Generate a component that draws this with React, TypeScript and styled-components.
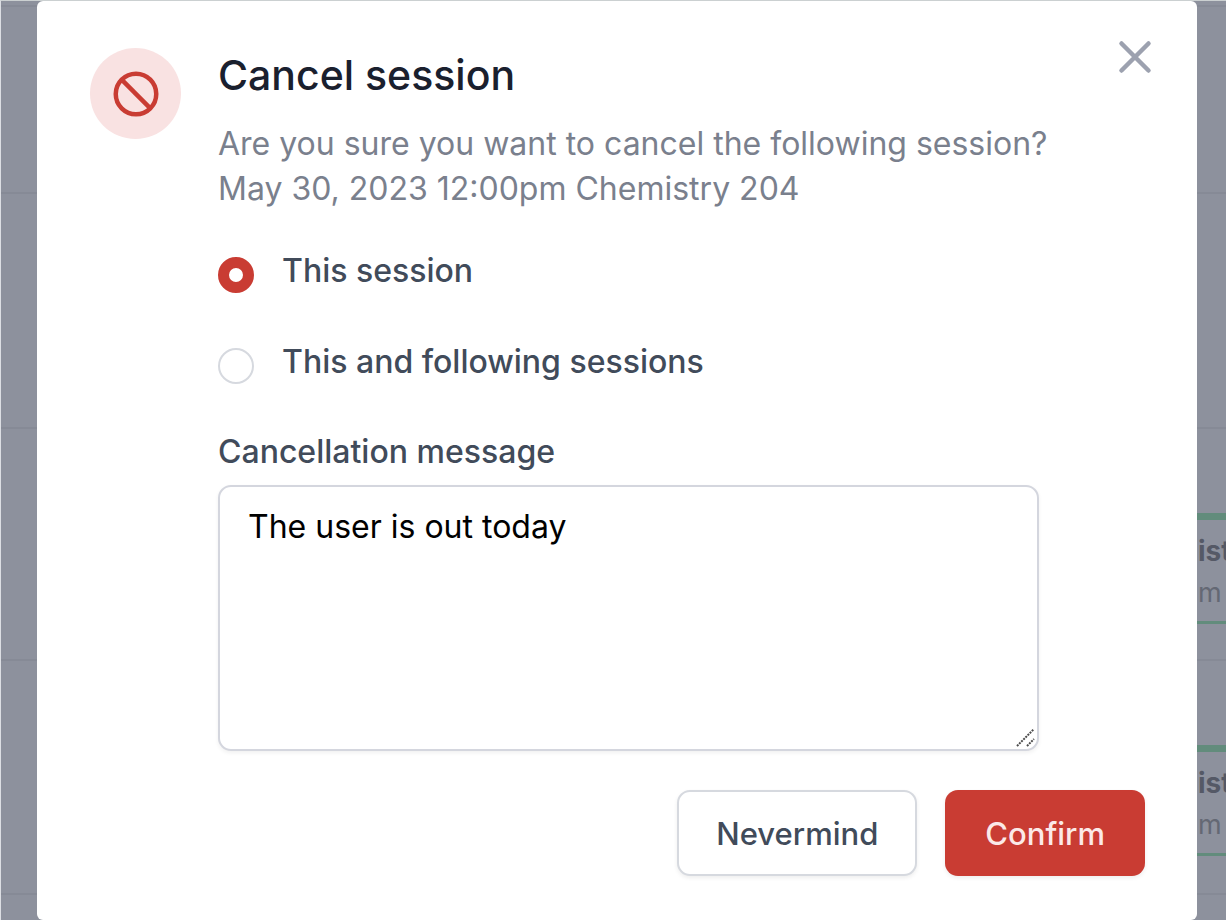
import React, { useState } from "react";
import styled, { createGlobalStyle } from "styled-components";

const GlobalStyle = createGlobalStyle`
  *, *::before, *::after { box-sizing: border-box; }
  body {
    margin: 0;
    background: #8d919d;
    font-family: Inter, "Liberation Sans", sans-serif;
    font-optical-sizing: none;
    -webkit-font-smoothing: antialiased;
  }
  h2, p, fieldset { margin: 0; padding: 0; border: 0; }
  button, textarea { font: inherit; }
`;

const Screen = styled.div`
  display: grid;
  min-height: 100vh;
  overflow: hidden;
  border-top: 1px solid #cbd0d1;
  border-left: 1px solid #dcdee3;
`;

const Calendar = styled.div`
  grid-area: 1 / 1;
  height: 0;
  min-height: 100%;
  overflow: hidden;
`;

const Slot = styled.div<{ $height: number }>`
  display: flex;
  justify-content: flex-end;
  height: ${(p) => p.$height}px;
  border-bottom: 2px solid #868a96;
`;

const EventCard = styled.div`
  width: 29px;
  height: 111px;
  margin-top: 84px;
  padding: 11px 0 0 1px;
  overflow: hidden;
  border-top: 7px solid #628c7c;
  border-bottom: 3px solid #628c7c;
  color: #646874;
  font-size: 28px;
  line-height: 41px;
  white-space: nowrap;
`;

const EventTitle = styled.div`
  color: #555966;
  font-weight: 700;
`;

const EventTime = styled.div`
  font-size: 27px;
`;

const Dialog = styled.form`
  grid-area: 1 / 1;
  z-index: 1;
  display: flex;
  flex-direction: column;
  margin: 0 29px 0 36px;
  padding-bottom: 43px;
  border-radius: 6px;
  background: #fff;
`;

const Body = styled.div`
  display: flex;
  align-items: flex-start;
  padding: 29px 35px 0 53px;
`;

const IconBadge = styled.div`
  display: flex;
  flex: none;
  align-items: center;
  justify-content: center;
  width: 91px;
  height: 91px;
  margin: 18px 37px 0 0;
  border-radius: 50%;
  background: #f9e2e2;
  color: #c93c33;
`;

const Content = styled.div`
  flex: 1;
  min-width: 0;
  padding-top: 18px;
  color: #414b5a;
  font-size: 32px;
  line-height: 45px;
`;

const Title = styled.h2`
  color: #1a202e;
  font-size: 41px;
  font-weight: 500;
  line-height: 54px;
`;

const Description = styled.p`
  margin: 19px -20px 0 0;
  color: #7a808d;
`;

const Options = styled.fieldset`
  display: flex;
  flex-direction: column;
  gap: 46px;
  margin-top: 37px;
`;

const Option = styled.label`
  display: flex;
  gap: 28px;
  align-items: flex-end;
  font-weight: 500;
`;

const Radio = styled.input`
  flex: none;
  appearance: none;
  width: 36px;
  height: 36px;
  margin: 0;
  border: 2px solid #d6d9df;
  border-radius: 50%;
  background: #fff;

  &:checked {
    border: 11px solid #c93c33;
  }
`;

const FieldLabel = styled.label`
  display: block;
  margin-top: 45px;
  font-weight: 500;
`;

const Message = styled.textarea`
  display: block;
  width: 100%;
  height: 266px;
  margin-top: 11px;
  padding: 17px 28px;
  border: 2px solid #d4d6de;
  border-radius: 13px;
  outline: none;
  box-shadow: 0 2px 4px rgba(0, 0, 0, 0.06);
  background: #fff;
  color: #000;
  resize: vertical;

  &::-webkit-resizer {
    background: transparent;
  }
`;

const MessageBox = styled.div`
  display: grid;

  > * { grid-area: 1 / 1; }
  > svg {
    place-self: end;
    margin: 0 3px 3px 0;
    pointer-events: none;
    z-index: 1;
  }
`;

const CloseButton = styled.button`
  flex: none;
  width: 54px;
  height: 54px;
  margin-left: 69px;
  padding: 0;
  border: 0;
  background: none;
  color: #9ca1af;
  cursor: pointer;
`;

const Footer = styled.div`
  display: flex;
  justify-content: flex-end;
  gap: 28px;
  padding: 39px 52px 0;
`;

const Button = styled.button<{ $primary?: boolean }>`
  height: 86px;
  padding: 0 ${(p) => (p.$primary ? 40 : 37)}px;
  border: ${(p) => (p.$primary ? "0" : "2px solid #d6d9df")};
  border-radius: 13px;
  box-shadow: 0 2px 4px rgba(0, 0, 0, 0.07);
  background: ${(p) => (p.$primary ? "#c93c33" : "#fff")};
  color: ${(p) => (p.$primary ? "#fbe9e8" : "#414b5a")};
  font-size: 31px;
  font-weight: 500;
  line-height: 45px;
  cursor: pointer;
`;

const slots = [
  { height: 6, event: false },
  { height: 187, event: false },
  { height: 235, event: false },
  { height: 232, event: true },
  { height: 234, event: true },
];

export default function App() {
  const [scope, setScope] = useState("one");
  const [message, setMessage] = useState("The user is out today");

  return (
    <>
      <GlobalStyle />
      <Screen>
        <Calendar aria-hidden="true">
          {slots.map((slot) => (
            <Slot key={slot.height} $height={slot.height}>
              {slot.event && (
                <EventCard>
                  <EventTitle>ist</EventTitle>
                  <EventTime>m</EventTime>
                </EventCard>
              )}
            </Slot>
          ))}
        </Calendar>
        <Dialog
          role="dialog"
          aria-labelledby="dialog-title"
          onSubmit={(e) => e.preventDefault()}
        >
          <Body>
            <IconBadge>
              <svg width="54" height="54" viewBox="0 0 24 24" fill="none" stroke="currentColor" strokeWidth="2" aria-hidden="true">
                <circle cx="12" cy="12" r="9" />
                <path d="M5.636 5.636l12.728 12.728" />
              </svg>
            </IconBadge>
            <Content>
              <Title id="dialog-title">Cancel session</Title>
              <Description>
                Are you sure you want to cancel the following session?
                <br />
                May 30, 2023 12:00pm Chemistry 204
              </Description>
              <Options>
                <Option>
                  <Radio type="radio" name="scope" checked={scope === "one"} onChange={() => setScope("one")} />
                  This session
                </Option>
                <Option>
                  <Radio type="radio" name="scope" checked={scope === "all"} onChange={() => setScope("all")} />
                  This and following sessions
                </Option>
              </Options>
              <FieldLabel htmlFor="message">Cancellation message</FieldLabel>
              <MessageBox>
                <Message id="message" value={message} onChange={(e) => setMessage(e.target.value)} />
                <svg width="20" height="20" viewBox="0 0 20 20" stroke="#4c4c4c" strokeWidth="2" strokeDasharray="2 1" aria-hidden="true">
                  <path d="M1 18L18 1M11 18l7-7" />
                </svg>
              </MessageBox>
            </Content>
            <CloseButton type="button" aria-label="Close">
              <svg width="54" height="54" viewBox="0 0 24 24" fill="none" stroke="currentColor" strokeWidth="2" strokeLinecap="round" aria-hidden="true">
                <path d="M6 18L18 6M6 6l12 12" />
              </svg>
            </CloseButton>
          </Body>
          <Footer>
            <Button type="button">Nevermind</Button>
            <Button type="submit" $primary>Confirm</Button>
          </Footer>
        </Dialog>
      </Screen>
    </>
  );
}
